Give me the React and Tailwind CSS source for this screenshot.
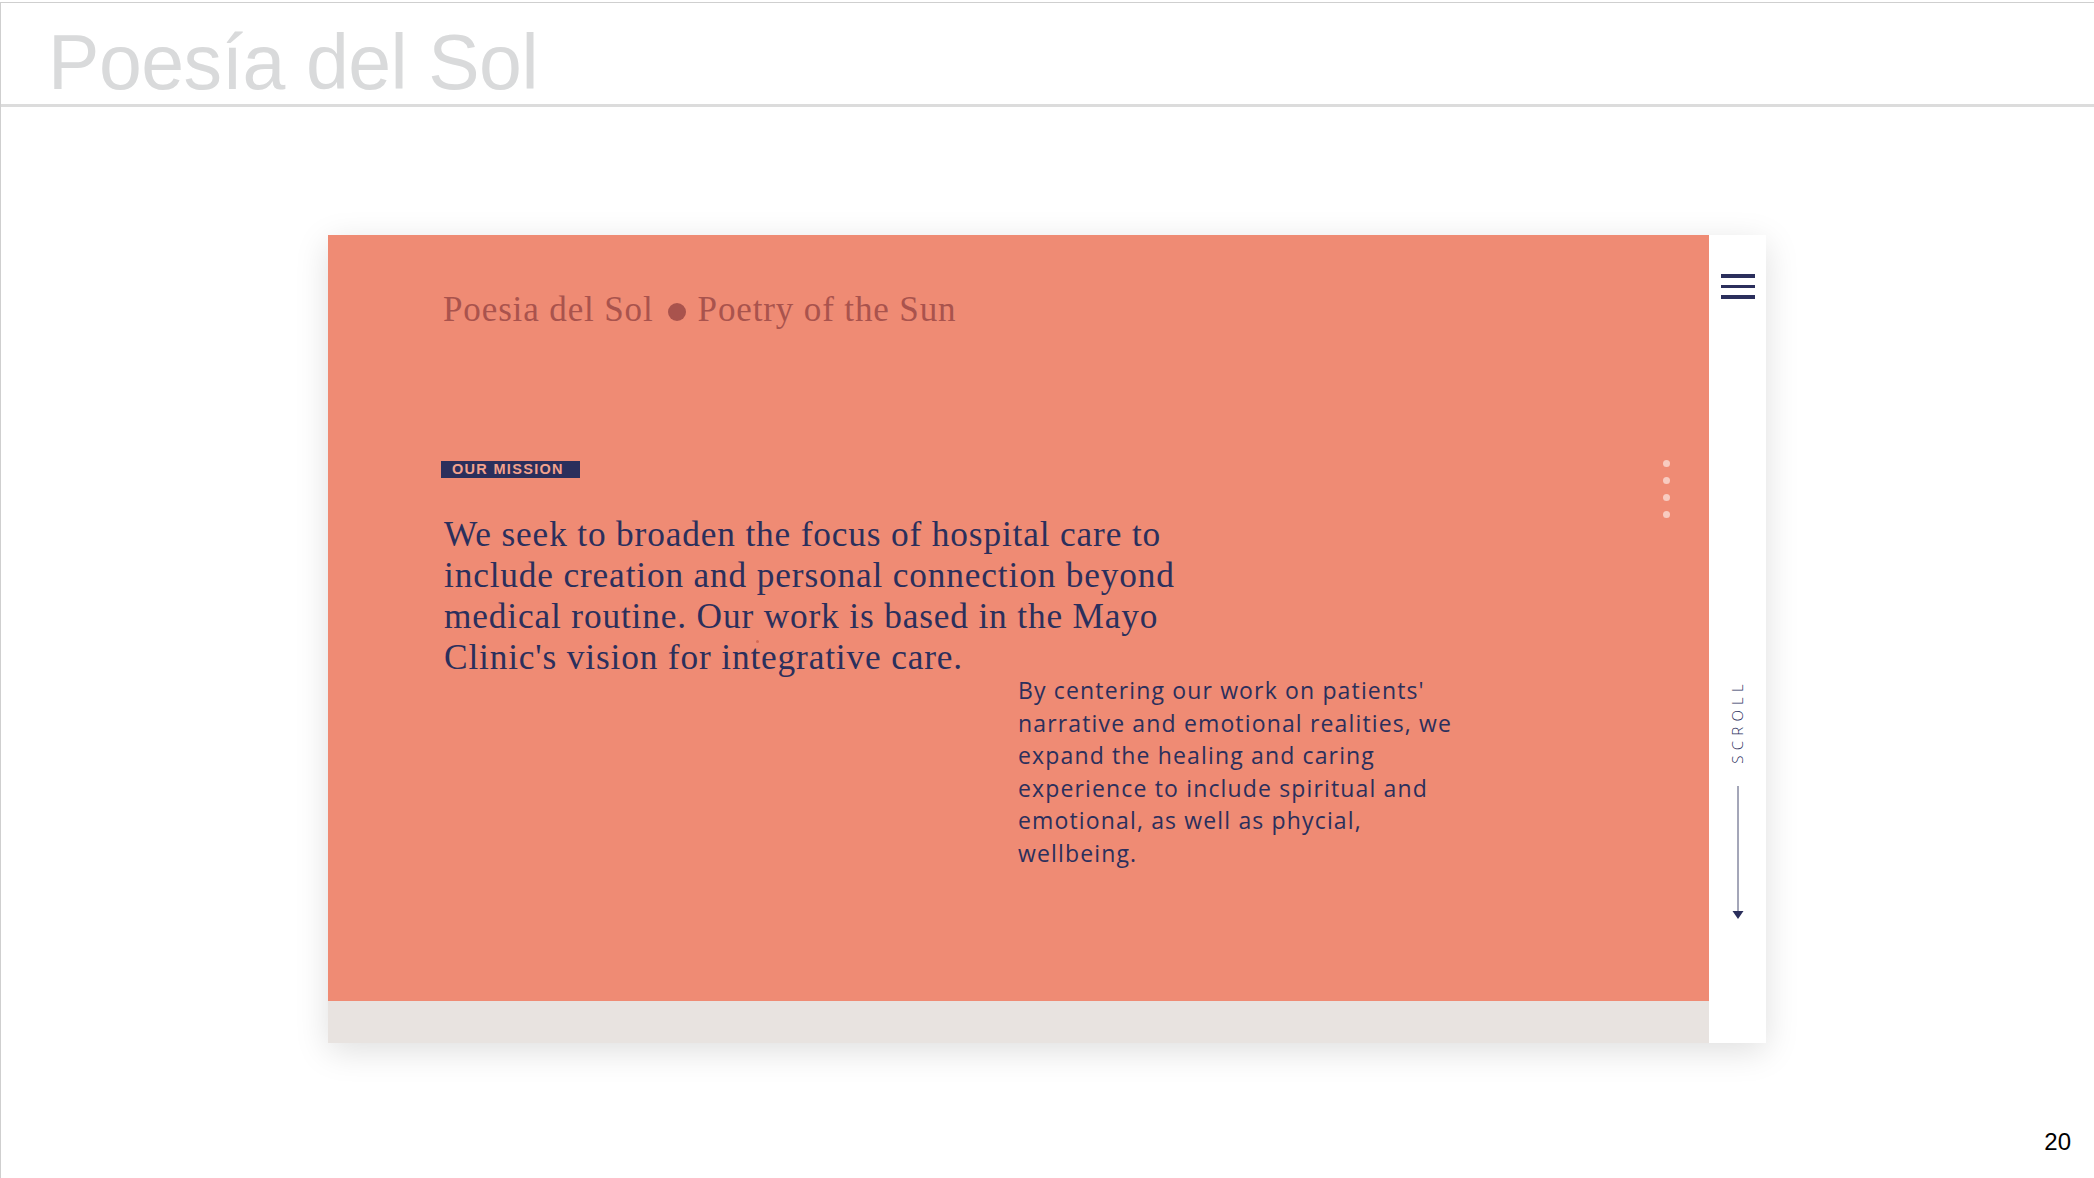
import React from 'react'

const NAVY = 'text-[#2b2f5c]'

function Hamburger() {
  return (
    <div className="flex flex-col gap-[7px] w-[34px]">
      <span className="block h-[4px] bg-[#2b2f5c]" />
      <span className="block h-[3px] bg-[#2b2f5c]" />
      <span className="block h-[4px] bg-[#2b2f5c]" />
    </div>
  )
}

function ScrollArrow() {
  return (
    <svg width="14" height="134" viewBox="0 0 14 134" className="block">
      <line x1="7" y1="0" x2="7" y2="126" stroke="#4a4e72" strokeWidth="1" />
      <path d="M1.5 125 L12.5 125 L7 133 Z" fill="#2b2f5c" />
    </svg>
  )
}

function NavDots() {
  return (
    <div className="absolute left-[1335px] top-[225px] flex flex-col gap-[10px]">
      {[0, 1, 2, 3].map(i => (
        <span key={i} className="block w-[7px] h-[7px] rounded-full bg-white/55" />
      ))}
    </div>
  )
}

export default function App() {
  return (
    <div className="w-[2094px] h-[1178px] bg-white overflow-hidden pt-[2px] font-['Liberation_Sans',Arial,sans-serif]">
      <div className="h-[1176px] border-t border-l border-[#cfcfcf]">
        {/* ── slide title ── */}
        <header className="h-[104px] border-b-[3px] border-[#dcdcdc] pl-[47px] pt-[21px]">
          <h1 className="text-[77px] leading-none text-[#d9dadb] tracking-[-0.006em]">Poesía del Sol</h1>
        </header>

        {/* ── embedded page mockup ── */}
        <div className="mt-[128px] ml-[327px] w-[1438px] h-[808px] flex bg-white shadow-[0_8px_32px_rgba(0,0,0,0.13)]">
          <div className="w-[1381px] flex flex-col">
            <section className="relative h-[766px] bg-[#ef8b74] font-['Liberation_Serif','Times_New_Roman',serif]">
              <div className="pt-[55px] pl-[115px] flex items-center text-[35px] leading-[40px] text-[#a9534d] tracking-[0.025em]">
                <span>Poesia del Sol</span>
                <span className="ml-[14px] mr-[12px] mt-[4px] block w-[18px] h-[18px] rounded-full bg-[#a9534d]" />
                <span>Poetry of the Sun</span>
              </div>

              <div className="mt-[131px] ml-[113px] w-[139px] h-[17px] bg-[#2b2f5c] pl-[11px] flex items-center font-['Liberation_Sans',Arial,sans-serif] text-[14.5px] leading-none font-bold tracking-[0.09em] text-[#f4a28c]">
                OUR MISSION
              </div>

              <p className={`mt-[36px] ml-[116px] text-[35.3px] leading-[41px] tracking-[0.024em] ${NAVY}`}>
                We seek to broaden the focus of hospital care to<br />
                include creation and personal connection beyond<br />
                medical routine. Our work is based in the Mayo<br />
                Clinic's vision for integrative care.
              </p>

              <p className={`-mt-[4px] ml-[690px] font-['Open_Sans',sans-serif] text-[23px] leading-[32.5px] tracking-[0.05em] ${NAVY}`}>
                By centering our work on patients'<br />
                narrative and emotional realities, we<br />
                expand the healing and caring<br />
                experience to include spiritual and<br />
                emotional, as well as phycial,<br />
                wellbeing.
              </p>

              <NavDots />
              <span className="absolute left-[428px] top-[405px] block w-[3px] h-[3px] rounded-full bg-[#d46a55]" />
            </section>
            <div className="h-[42px] bg-[#e8e3e0]" />
          </div>

          {/* ── side rail ── */}
          <aside className="w-[57px] flex flex-col items-center pt-[39px]">
            <Hamburger />
            <span className={`mt-[380px] [writing-mode:vertical-rl] rotate-180 font-['Open_Sans',sans-serif] font-light text-[15px] leading-none tracking-[0.35em] ${NAVY}`}>
              SCROLL
            </span>
            <div className="mt-[22px]">
              <ScrollArrow />
            </div>
          </aside>
        </div>

        <div className="mt-[87px] flex justify-end pr-[23px]">
          <span className="text-[24px] leading-none text-black">20</span>
        </div>
      </div>
    </div>
  )
}
